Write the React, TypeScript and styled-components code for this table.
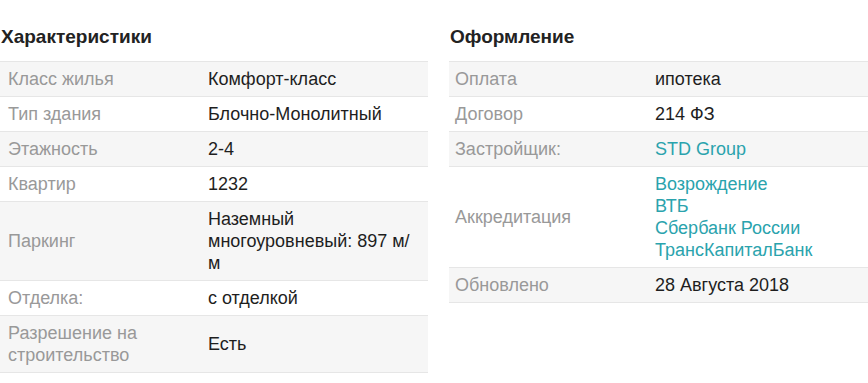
import React from 'react';
import styled, { createGlobalStyle } from 'styled-components';

const GlobalStyle = createGlobalStyle`
  html, body {
    margin: 0;
    padding: 0;
    background: #fff;
    overflow: hidden;
  }
  body {
    font-family: 'Liberation Sans', Arial, sans-serif;
    color: #222;
  }
`;

const Page = styled.div`
  display: grid;
  grid-template-columns: 428px 430px;
  column-gap: 21px;
  padding-top: 25px;
  width: 900px;
`;

const Section = styled.section`
  display: flex;
  flex-direction: column;
`;

const Heading = styled.h3`
  margin: 0 0 12px 1px;
  font-size: 19px;
  line-height: 24px;
  font-weight: 700;
  color: #222;
`;

const Table = styled.div`
  display: flex;
  flex-direction: column;
  border-top: 1px solid #e6e6e6;
`;

const Row = styled.div<{ $striped: boolean; $inset: number }>`
  display: grid;
  grid-template-columns: 200px 1fr;
  align-items: center;
  background: ${({ $striped }) => ($striped ? '#f6f6f6' : '#fff')};
  border-bottom: 1px solid #e6e6e6;

  & > div {
    padding: 6px 8px 6px ${({ $inset }) => $inset}px;
    font-size: 18px;
    line-height: 22px;
  }
`;

const Label = styled.div`
  color: #999;
`;

const Value = styled.div`
  color: #1e1e1e;
`;

const Link = styled.a`
  display: block;
  color: #2aa3ad;
  text-decoration: none;
`;

type Item = { label: string; value: React.ReactNode };

const specs: Item[] = [
  { label: 'Класс жилья', value: 'Комфорт-класс' },
  { label: 'Тип здания', value: 'Блочно-Монолитный' },
  { label: 'Этажность', value: '2-4' },
  { label: 'Квартир', value: '1232' },
  { label: 'Паркинг', value: 'Наземный многоуровневый: 897 м/м' },
  { label: 'Отделка:', value: 'с отделкой' },
  { label: 'Разрешение на строительство', value: 'Есть' },
];

const banks = ['Возрождение', 'ВТБ', 'Сбербанк России', 'ТрансКапиталБанк'];

const deal: Item[] = [
  { label: 'Оплата', value: 'ипотека' },
  { label: 'Договор', value: '214 ФЗ' },
  { label: 'Застройщик:', value: <Link href="#">STD Group</Link> },
  {
    label: 'Аккредитация',
    value: banks.map((b) => (
      <Link key={b} href="#">
        {b}
      </Link>
    )),
  },
  { label: 'Обновлено', value: '28 Августа 2018' },
];

const InfoTable = ({ title, items, inset }: { title: string; items: Item[]; inset: number }) => (
  <Section>
    <Heading>{title}</Heading>
    <Table>
      {items.map((it, i) => (
        <Row key={it.label} $striped={i % 2 === 0} $inset={inset}>
          <Label>{it.label}</Label>
          <Value>{it.value}</Value>
        </Row>
      ))}
    </Table>
  </Section>
);

export default function App() {
  return (
    <>
      <GlobalStyle />
      <Page>
        <InfoTable title="Характеристики" items={specs} inset={8} />
        <InfoTable title="Оформление" items={deal} inset={6} />
      </Page>
    </>
  );
}
